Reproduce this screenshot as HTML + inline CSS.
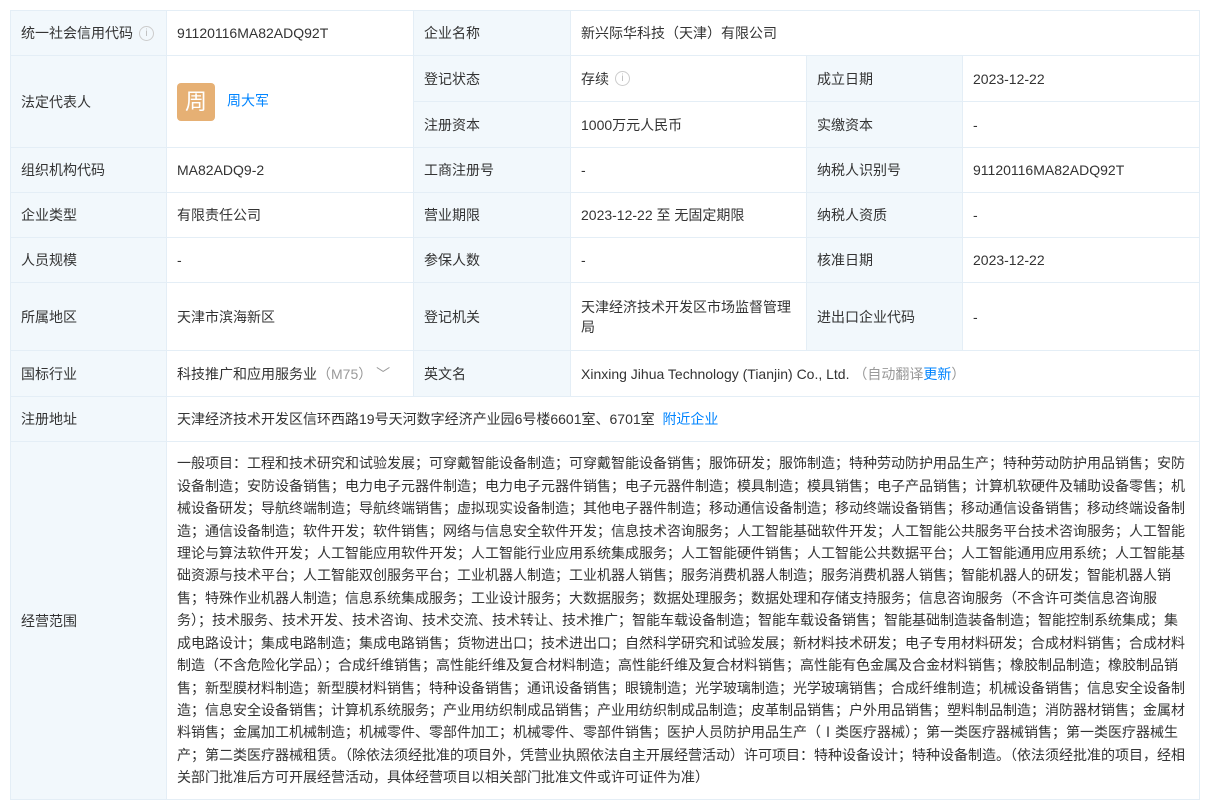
<!DOCTYPE html>
<html><head><meta charset="utf-8"><style>
body{margin:0;background:#fff;font-family:"Liberation Sans","Noto Sans CJK SC",sans-serif;font-size:14px;color:#333;}
table{position:absolute;left:10px;top:10px;border-collapse:collapse;table-layout:fixed;width:1189px;}
td{border:1px solid #e4eef6;padding:0 10px;vertical-align:middle;line-height:20px;white-space:normal;}
td.l{background:#f2f8fc;}
.i{display:inline-block;box-sizing:border-box;width:15px;height:15px;border:1px solid #ccc;border-radius:50%;font-size:10px;line-height:13px;text-align:center;color:#bbb;vertical-align:middle;margin-left:6px;position:relative;top:-1px;}
a{color:#0084ff;text-decoration:none;}
.g{color:#999;}
.av{display:inline-block;width:38px;height:38px;border-radius:4px;background:#e6b074;color:#fff;font-size:22px;line-height:38px;text-align:center;vertical-align:middle;margin-right:12px;}
.sc{line-height:22.4px;padding:2px 10px;}
.nw{white-space:nowrap;}
</style></head><body>
<table>
<colgroup><col style="width:156px"><col style="width:247px"><col style="width:157px"><col style="width:236px"><col style="width:156px"><col style="width:237px"></colgroup>
<tr style="height:45px"><td class="l nw">统一社会信用代码<span class="i">i</span></td><td>91120116MA82ADQ92T</td><td class="l">企业名称</td><td colspan="3">新兴际华科技（天津）有限公司</td></tr>
<tr style="height:46px"><td class="l" rowspan="2">法定代表人</td><td rowspan="2"><span class="av">周</span><a>周大军</a></td><td class="l">登记状态</td><td class="nw">存续<span class="i">i</span></td><td class="l">成立日期</td><td>2023-12-22</td></tr>
<tr style="height:46px"><td class="l">注册资本</td><td>1000万元人民币</td><td class="l">实缴资本</td><td>-</td></tr>
<tr style="height:45px"><td class="l">组织机构代码</td><td>MA82ADQ9-2</td><td class="l">工商注册号</td><td>-</td><td class="l">纳税人识别号</td><td>91120116MA82ADQ92T</td></tr>
<tr style="height:45px"><td class="l">企业类型</td><td>有限责任公司</td><td class="l">营业期限</td><td>2023-12-22 至 无固定期限</td><td class="l">纳税人资质</td><td>-</td></tr>
<tr style="height:45px"><td class="l">人员规模</td><td>-</td><td class="l">参保人数</td><td>-</td><td class="l">核准日期</td><td>2023-12-22</td></tr>
<tr style="height:68px"><td class="l">所属地区</td><td>天津市滨海新区</td><td class="l">登记机关</td><td>天津经济技术开发区市场监督管理局</td><td class="l">进出口企业代码</td><td>-</td></tr>
<tr style="height:46px"><td class="l">国标行业</td><td class="nw">科技推广和应用服务业<span class="g">（M75）</span> <span class="g">﹀</span></td><td class="l">英文名</td><td colspan="3">Xinxing Jihua Technology (Tianjin) Co., Ltd. <span class="g">（自动翻译</span><a>更新</a><span class="g">）</span></td></tr>
<tr style="height:45px"><td class="l">注册地址</td><td colspan="5">天津经济技术开发区信环西路19号天河数字经济产业园6号楼6601室、6701室 &nbsp;<a>附近企业</a></td></tr>
<tr style="height:358px"><td class="l">经营范围</td><td colspan="5" class="sc">一般项目：工程和技术研究和试验发展；可穿戴智能设备制造；可穿戴智能设备销售；服饰研发；服饰制造；特种劳动防护用品生产；特种劳动防护用品销售；安防设备制造；安防设备销售；电力电子元器件制造；电力电子元器件销售；电子元器件制造；模具制造；模具销售；电子产品销售；计算机软硬件及辅助设备零售；机械设备研发；导航终端制造；导航终端销售；虚拟现实设备制造；其他电子器件制造；移动通信设备制造；移动终端设备销售；移动通信设备销售；移动终端设备制造；通信设备制造；软件开发；软件销售；网络与信息安全软件开发；信息技术咨询服务；人工智能基础软件开发；人工智能公共服务平台技术咨询服务；人工智能理论与算法软件开发；人工智能应用软件开发；人工智能行业应用系统集成服务；人工智能硬件销售；人工智能公共数据平台；人工智能通用应用系统；人工智能基础资源与技术平台；人工智能双创服务平台；工业机器人制造；工业机器人销售；服务消费机器人制造；服务消费机器人销售；智能机器人的研发；智能机器人销售；特殊作业机器人制造；信息系统集成服务；工业设计服务；大数据服务；数据处理服务；数据处理和存储支持服务；信息咨询服务（不含许可类信息咨询服务）；技术服务、技术开发、技术咨询、技术交流、技术转让、技术推广；智能车载设备制造；智能车载设备销售；智能基础制造装备制造；智能控制系统集成；集成电路设计；集成电路制造；集成电路销售；货物进出口；技术进出口；自然科学研究和试验发展；新材料技术研发；电子专用材料研发；合成材料销售；合成材料制造（不含危险化学品）；合成纤维销售；高性能纤维及复合材料制造；高性能纤维及复合材料销售；高性能有色金属及合金材料销售；橡胶制品制造；橡胶制品销售；新型膜材料制造；新型膜材料销售；特种设备销售；通讯设备销售；眼镜制造；光学玻璃制造；光学玻璃销售；合成纤维制造；机械设备销售；信息安全设备制造；信息安全设备销售；计算机系统服务；产业用纺织制成品销售；产业用纺织制成品制造；皮革制品销售；户外用品销售；塑料制品制造；消防器材销售；金属材料销售；金属加工机械制造；机械零件、零部件加工；机械零件、零部件销售；医护人员防护用品生产（Ⅰ类医疗器械）；第一类医疗器械销售；第一类医疗器械生产；第二类医疗器械租赁。（除依法须经批准的项目外，凭营业执照依法自主开展经营活动）许可项目：特种设备设计；特种设备制造。（依法须经批准的项目，经相关部门批准后方可开展经营活动，具体经营项目以相关部门批准文件或许可证件为准）</td></tr>
</table>
</body></html>
